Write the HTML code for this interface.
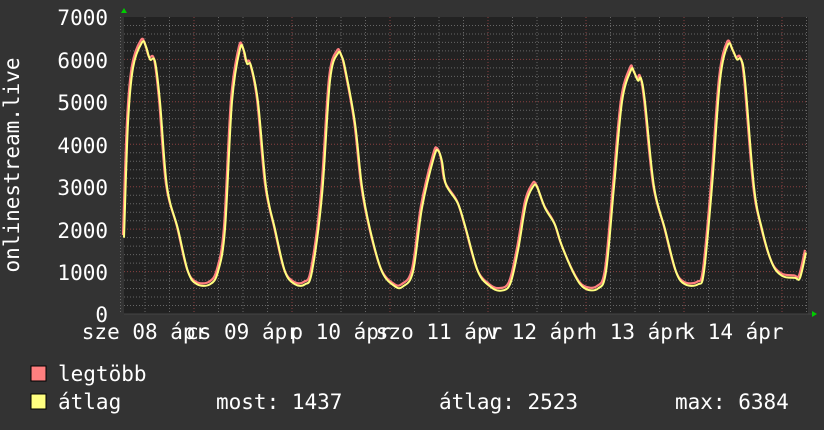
<!DOCTYPE html>
<html><head><meta charset="utf-8"><style>
body{margin:0;background:#333;width:824px;height:430px;overflow:hidden;font-family:"DejaVu Sans Mono","Liberation Mono",monospace;color:#fff}
svg{position:absolute;left:0;top:0}
text{font-family:"DejaVu Sans Mono","Liberation Mono",monospace;fill:#fff}
</style></head><body>
<svg id="s" width="824" height="430" xmlns="http://www.w3.org/2000/svg">
<rect x="0" y="0" width="824" height="430" fill="#333"/>
<rect x="124" y="17" width="684" height="297" fill="#222"/>
<g id="grid"></g>
<g font-size="21" text-anchor="end">
<text x="108" y="25">7000</text>
<text x="108" y="68">6000</text>
<text x="108" y="110">5000</text>
<text x="108" y="153">4000</text>
<text x="108" y="195">3000</text>
<text x="108" y="238">2000</text>
<text x="108" y="280">1000</text>
<text x="108" y="322">0</text>
</g>
<text font-size="21" transform="translate(19,165) rotate(-90)" text-anchor="middle">onlinestream.live</text>
<g font-size="21" text-anchor="middle">
<text x="145" y="339">sze 08 ápr</text>
<text x="243" y="339">cs 09 ápr</text>
<text x="341" y="339">p 10 ápr</text>
<text x="439" y="339">szo 11 ápr</text>
<text x="537" y="339">v 12 ápr</text>
<text x="635" y="339">h 13 ápr</text>
<text x="733" y="339">k 14 ápr</text>
</g>
<path id="red" fill="none" stroke="#ff7f7f" stroke-width="2.2"/>
<path id="yel" fill="none" stroke="#ffff80" stroke-width="2"/>
<polygon points="121,13 127,13 124,8" fill="#0c0"/>
<polygon points="812,311 812,317 817,314" fill="#0c0"/>
<rect x="31" y="366" width="15" height="15" fill="#ff7f7f" stroke="#000"/>
<rect x="31" y="394" width="15" height="15" fill="#ffff80" stroke="#000"/>
<g font-size="21">
<text x="58" y="381">legtöbb</text>
<text x="58" y="409">átlag</text>
<text x="216" y="409">most: 1437</text>
<text x="439" y="409">átlag: 2523</text>
<text x="675" y="409">max: 6384</text>
</g>
</svg>
<script>
var g=document.getElementById('grid'),h='';
function Y(v){return 314-v*0.04243;}
for(var v=200;v<7000;v+=200){var y=Y(v).toFixed(1);var maj=v%1000==0;
h+='<line x1="124" x2="808" y1="'+y+'" y2="'+y+'" stroke="'+(maj?'#8a4040':'#666')+'" stroke-dasharray="1,2"/>';}
for(var x=96+24.5;x<808;x+=24.5){var d=Math.round((x-96)/24.5)%4==0;
h+='<line y1="17" y2="314" x1="'+x+'" x2="'+x+'" stroke="'+(d?'#8a4040':'#666')+'" stroke-dasharray="1,2"/>';}
h+='<line x1="124" x2="812" y1="314" y2="314" stroke="#444"/>';
g.innerHTML=h;
var pts=[[124,1800],[128,4500],[133,5800],[142,6400],[146,6300],[150,6000],[155,5950],[160,5000],[167,3000],[178,2000],[188,1000],[197,700],[210,700],[218,1000],[225,2000],[232,5000],[240,6250],[244,6200],[247,5900],[251,5850],[258,5000],[266,3000],[275,2000],[285,1000],[295,700],[305,700],[312,1000],[322,2800],[330,5500],[338,6150],[342,6050],[345,5800],[355,4500],[362,3000],[370,2000],[382,1000],[395,650],[403,650],[413,1000],[422,2500],[434,3700],[438,3850],[442,3600],[446,3050],[458,2600],[466,2000],[478,1000],[490,650],[500,550],[510,700],[518,1500],[526,2600],[533,3000],[537,3000],[545,2500],[555,2100],[562,1600],[575,900],[585,600],[598,600],[606,1000],[614,3000],[622,5000],[631,5750],[634,5700],[638,5500],[641,5550],[645,5000],[654,3000],[665,2000],[676,1000],[685,700],[698,700],[704,1000],[712,3000],[720,5500],[728,6350],[733,6200],[737,6000],[741,6000],[745,5500],[754,3000],[762,2000],[772,1200],[782,900],[795,850],[800,850],[806,1450]];
function P(dx,dv){
 var q=pts.map(function(p){return [p[0]+dx,Y(p[1]+dv)]});
 var d='M'+q[0][0]+','+q[0][1].toFixed(1);
 for(var i=0;i<q.length-1;i++){
  var p0=q[Math.max(0,i-1)],p1=q[i],p2=q[i+1],p3=q[Math.min(q.length-1,i+2)];
  var c1x=p1[0]+(p2[0]-p0[0])/6,c1y=p1[1]+(p2[1]-p0[1])/6;
  var c2x=p2[0]-(p3[0]-p1[0])/6,c2y=p2[1]-(p3[1]-p1[1])/6;
  d+='C'+c1x.toFixed(1)+','+c1y.toFixed(1)+' '+c2x.toFixed(1)+','+c2y.toFixed(1)+' '+p2[0]+','+p2[1].toFixed(1);
 }
 return d;}
document.getElementById('red').setAttribute('d',P(-1,60));
document.getElementById('yel').setAttribute('d',P(0,0));
</script>
</body></html>
